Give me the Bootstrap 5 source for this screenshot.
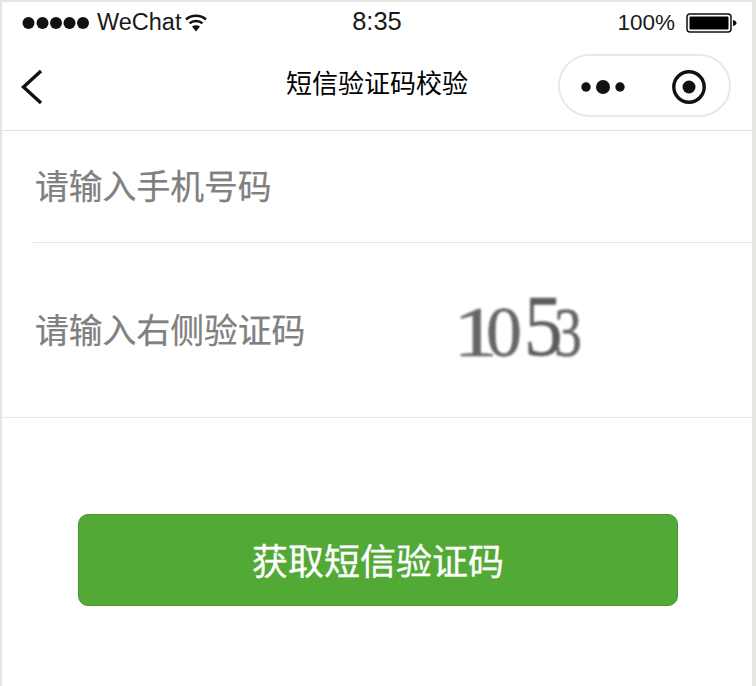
<!DOCTYPE html>
<html lang="zh">
<head>
<meta charset="utf-8">
<title>短信验证码校验</title>
<link href="https://cdn.jsdelivr.net/npm/bootstrap@5.3.0/dist/css/bootstrap.min.css" rel="stylesheet">
<style>
html,body{height:100%;}
body{background:#e6e6e1;padding:2px 4px 0 2px;font-family:"Liberation Sans","Noto Sans CJK SC",sans-serif;overflow:hidden;color:#000;}
.phone-frame{background:#fff;height:684px;}
.status-bar{height:41px;padding:0 14px 0 20px;font-size:23.5px;color:#1a1a1a;}
.signal-dots{width:68px;}
.carrier{margin-left:7px;}
.clock{left:0;right:0;top:0;font-size:25.5px;text-align:center;}
.battery-text{font-size:22.5px;margin-right:11px;}
.top-nav{height:88px;border-bottom:1px solid #e2e2e2;padding:0 0 0 18px;}
.nav-title{left:0;right:0;top:23px;text-align:center;font-size:26px;line-height:32px;font-family:"Noto Sans CJK SC",sans-serif;}
.capsule{width:173px;height:63px;border:2px solid #e8e8e8;border-radius:32px;margin:-2px 21px 0 auto;padding:3px 22px 0 21px;}
.field-one{height:112px;margin-left:31px;border-bottom:1px solid #e6e6e6;padding:0 0 4px 2px;}
.field-two{height:175px;border-bottom:1px solid #e6e6e6;padding:0 0 0 33px;}
.hint-text{font-family:"Noto Sans CJK SC",sans-serif;font-size:33.8px;color:#808080;line-height:44px;-webkit-text-stroke:.25px #808080;}
.field-two .hint-text{width:418px;margin-top:-2px;}
.captcha-box{height:90px;width:140px;font-family:"Liberation Serif",serif;color:#666;filter:blur(.8px);line-height:1;margin-top:-14px;-webkit-text-stroke:.5px #666;}
.captcha-box span{display:inline-block;}
.cap-a{font-size:72px;width:33px;transform:scaleX(1.25);transform-origin:left bottom;}
.cap-b{font-size:72px;margin-left:0;width:38px;}
.cap-c{font-size:86px;width:32px;transform:translateY(1px) scaleX(.9);transform-origin:left bottom;color:#5c5c5c;}
.cap-d{font-size:70px;margin-left:-2px;transform:scaleX(.8);transform-origin:left bottom;}
.action-wrap{padding:96px 74px 0 76px;}
.get-code{background:#52a936;border:1px solid #4a9631;border-radius:10px;color:#fff;height:92px;width:100%;font-family:"Noto Sans CJK SC",sans-serif;font-size:36px;line-height:1;padding:0 0 3px;-webkit-text-stroke:.3px #fff;}
.get-code:hover,.get-code:active{background:#52a936!important;border-color:#4a9631!important;color:#fff!important;}
</style>
</head>
<body>
<div class="phone-frame">
  <div class="status-bar d-flex align-items-center position-relative">
    <svg class="signal-dots" height="14" viewBox="0 0 68 14"><g fill="#111"><circle cx="6.5" cy="7" r="6"/><circle cx="20.5" cy="7" r="6"/><circle cx="34" cy="7" r="6"/><circle cx="47.5" cy="7" r="6"/><circle cx="61" cy="7" r="6"/></g></svg>
    <span class="carrier">WeChat</span>
    <svg width="22" height="20" viewBox="0 0 22 20" class="ms-1"><g fill="none" stroke="#111" stroke-width="2.4"><path d="M1 6.5C6.5 1.5 15.500 1.500 21 6.500"/><path d="M4.500 10.300C8 7.300 14 7.300 17.500 10.300"/></g><path d="M7 13.500Q11 10.800 15 13.500L11 18.500Z" fill="#111"/></svg>
    <div class="clock position-absolute">8:35</div>
    <span class="battery-text ms-auto">100%</span>
    <svg width="52" height="20" viewBox="0 0 52 20"><rect x="1" y="1" width="44" height="18" rx="3" fill="none" stroke="#111" stroke-width="1.500"/><rect x="3.500" y="3.500" width="39" height="13" rx="1" fill="#000"/><path d="M47 7Q50.500 8 50.500 10T47 13Z" fill="#111"/></svg>
  </div>
  <div class="top-nav d-flex align-items-center position-relative">
    <svg width="24" height="36" viewBox="0 0 24 36"><path d="M21 2L3.500 18L21 34" fill="none" stroke="#111" stroke-width="3.400"/></svg>
    <div class="nav-title position-absolute">短信验证码校验</div>
    <div class="capsule d-flex align-items-center justify-content-between">
      <svg width="44" height="18" viewBox="0 0 44 18"><g fill="#111"><circle cx="5" cy="9" r="4.700"/><circle cx="22" cy="9" r="7"/><circle cx="39" cy="9" r="4.700"/></g></svg>
      <svg width="36" height="36" viewBox="0 0 36 36"><circle cx="18" cy="18" r="15.200" fill="none" stroke="#111" stroke-width="3.400"/><circle cx="18" cy="18" r="6.500" fill="#111"/></svg>
    </div>
  </div>
  <div class="field-one d-flex align-items-center"><span class="hint-text">请输入手机号码</span></div>
  <div class="field-two d-flex align-items-center">
    <span class="hint-text">请输入右侧验证码</span>
    <div class="captcha-box d-flex align-items-end"><span class="cap-a">1</span><span class="cap-b">0</span><span class="cap-c">5</span><span class="cap-d">3</span></div>
  </div>
  <div class="action-wrap"><button type="button" class="btn get-code">获取短信验证码</button></div>
</div>
<script src="https://cdn.jsdelivr.net/npm/bootstrap@5.3.0/dist/js/bootstrap.bundle.min.js"></script>
</body>
</html>
